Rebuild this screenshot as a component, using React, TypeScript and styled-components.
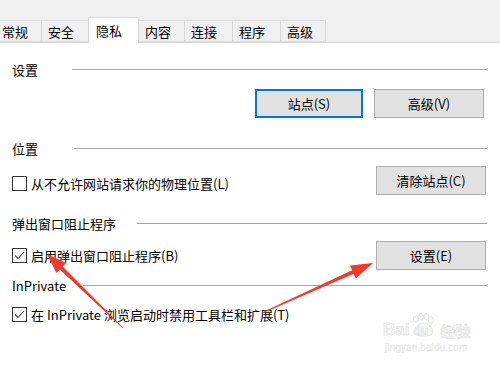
import React from "react";
import styled, { createGlobalStyle } from "styled-components";

const GlobalStyle = createGlobalStyle`
  html, body {
    margin: 0;
    padding: 0;
    background: #ffffff;
  }
  body {
    font-family: "Noto Sans CJK SC", "Noto Sans", sans-serif;
    color: #000;
  }
`;

const Page = styled.div`
  position: relative;
  width: 500px;
  height: 368px;
  overflow: hidden;
  background: #fff;
`;

const TabStrip = styled.div`
  display: flex;
  align-items: flex-end;
  height: 42px;
  background: #f0f0f0;
  border-bottom: 1px solid #d9d9d9;
`;

const Tab = styled.div<{ $w: number; $active?: boolean; $first?: boolean }>`
  box-sizing: border-box;
  display: flex;
  align-items: center;
  width: ${(p) => p.$w}px;
  height: ${(p) => (p.$active ? 26 : 22)}px;
  margin-right: -1px;
  margin-left: ${(p) => (p.$first ? -5 : 0)}px;
  margin-bottom: ${(p) => (p.$active ? -1 : 0)}px;
  padding-left: ${(p) => (p.$active ? 7 : 6)}px;
  border: 1px solid #d9d9d9;
  border-bottom: ${(p) => (p.$active ? "none" : "1px solid #d9d9d9")};
  background: ${(p) => (p.$active ? "#fff" : "#f0f0f0")};
  position: relative;
  z-index: ${(p) => (p.$active ? 1 : 0)};
  font-size: 13px;
  line-height: 1;
  white-space: nowrap;
`;

const Content = styled.div`
  padding: 0 13px 0 12px;
`;

const Heading = styled.div<{ $mt: number }>`
  display: flex;
  align-items: center;
  height: 20px;
  margin-top: ${(p) => p.$mt}px;
  font-size: 13px;
  line-height: 1;
  white-space: nowrap;
`;

const Rule = styled.div<{ $gap: number }>`
  flex: 1;
  height: 1px;
  margin-left: ${(p) => p.$gap}px;
  background: #a6a6a6;
`;

const Row = styled.div<{ $mt: number; $h?: number }>`
  display: flex;
  align-items: center;
  justify-content: space-between;
  height: ${(p) => p.$h ?? 29}px;
  margin-top: ${(p) => p.$mt}px;
`;

const ButtonGroup = styled.div<{ $pr: number }>`
  display: flex;
  gap: 11px;
  margin-left: auto;
  padding-right: ${(p) => p.$pr}px;
`;

const Button = styled.button<{ $w: number; $focused?: boolean }>`
  box-sizing: border-box;
  width: ${(p) => p.$w}px;
  height: 29px;
  padding: 0;
  background: #e1e1e1;
  border: ${(p) => (p.$focused ? "2px solid #0078d7" : "1px solid #adadad")};
  font-family: inherit;
  font-size: 13px;
  color: #000;
  line-height: 1;
`;

const Option = styled.label<{ $shift?: number }>`
  display: flex;
  align-items: center;
  gap: 4px;
  padding-top: ${(p) => (p.$shift ?? 0) * 2}px;
  font-size: 13px;
  line-height: 1;
  white-space: nowrap;
`;

const Box = styled.span`
  box-sizing: border-box;
  display: flex;
  align-items: center;
  justify-content: center;
  width: 15px;
  height: 15px;
  border: 1px solid #333;
  background: #fff;
`;

const Overlay = styled.svg`
  position: absolute;
  left: 0;
  top: 0;
  pointer-events: none;
`;

const Watermark = styled.div`
  position: absolute;
  left: 383px;
  top: 313px;
  display: flex;
  flex-direction: column;
  align-items: flex-start;
  color: #f6f6f6;
  -webkit-text-stroke: 0.6px #e2e2e2;
  pointer-events: none;
`;

const MarkTop = styled.div`
  display: flex;
  align-items: flex-end;
  font-family: "Liberation Sans", sans-serif;
  font-weight: bold;
  font-size: 17px;
  line-height: 1;
`;

const Paw = styled.div`
  position: relative;
  width: 26px;
  height: 25px;
  margin: 0 2px 0 1px;
`;

const PawText = styled.span`
  position: absolute;
  left: 3px;
  bottom: 1px;
  font-size: 12px;
`;

const MarkCn = styled.span`
  font-family: "Noto Sans CJK SC", sans-serif;
  font-size: 15px;
  margin-left: 2px;
`;

const MarkUrl = styled.div`
  margin-top: 4px;
  margin-left: 2px;
  font-family: "Liberation Sans", sans-serif;
  font-size: 10px;
  -webkit-text-stroke: 0.4px #e4e4e4;
  letter-spacing: 0.1px;
`;

const tabs = [
  { label: "常规", w: 47 },
  { label: "安全", w: 48 },
  { label: "隐私", w: 51, active: true },
  { label: "内容", w: 47 },
  { label: "连接", w: 49 },
  { label: "程序", w: 49 },
  { label: "高级", w: 46 },
];

function Check({ checked }: { checked?: boolean }) {
  return (
    <Box>
      {checked ? (
        <svg width="11" height="9" viewBox="0 0 11 9">
          <polyline points="1,4.5 4,7.5 10,1" fill="none" stroke="#444" strokeWidth="1.1" />
        </svg>
      ) : null}
    </Box>
  );
}

export default function App() {
  return (
    <Page>
      <GlobalStyle />
      <TabStrip>
        {tabs.map((t, i) => (
          <Tab key={t.label} $w={t.w} $active={t.active} $first={i === 0}>
            {t.label}
          </Tab>
        ))}
      </TabStrip>

      <Content>
        <Heading $mt={16}>
          设置
          <Rule $gap={34} />
        </Heading>
        <Row $mt={9} $h={30}>
          <ButtonGroup $pr={3}>
            <Button $w={108} $focused>站点(S)</Button>
            <Button $w={110}>高级(V)</Button>
          </ButtonGroup>
        </Row>

        <Heading $mt={20}>
          位置
          <Rule $gap={36} />
        </Heading>
        <Row $mt={8}>
          <Option $shift={3}>
            <Check />
            从不允许网站请求你的物理位置(L)
          </Option>
          <ButtonGroup $pr={1}>
            <Button $w={110}>清除站点(C)</Button>
          </ButtonGroup>
        </Row>

        <Heading $mt={18}>
          弹出窗口阻止程序
          <Rule $gap={21} />
        </Heading>
        <Row $mt={8}>
          <Option>
            <Check checked />
            启用弹出窗口阻止程序(B)
          </Option>
          <ButtonGroup $pr={1}>
            <Button $w={110}>设置(E)</Button>
          </ButtonGroup>
        </Row>

        <Heading $mt={5}>
          InPrivate
          <Rule $gap={17} />
        </Heading>
        <Row $mt={5} $h={28}>
          <Option>
            <Check checked />
            在 InPrivate 浏览启动时禁用工具栏和扩展(T)
          </Option>
        </Row>
      </Content>

      <Watermark>
        <MarkTop>
          Bai
          <Paw>
            <svg width="26" height="25" viewBox="0 0 26 25">
              <g fill="#f7f7f7" stroke="#e0e0e0" strokeWidth="0.8">
                <ellipse cx="6" cy="6" rx="2.6" ry="3.2" />
                <ellipse cx="11" cy="3.5" rx="2.6" ry="3.2" />
                <ellipse cx="16.5" cy="3.5" rx="2.6" ry="3.2" />
                <ellipse cx="21" cy="7" rx="2.6" ry="3.2" />
                <path d="M4 20 C4 14 9 10 13 10 C18 10 23 14 23 20 C23 24 4 24 4 20 Z" />
              </g>
            </svg>
            <PawText>du</PawText>
          </Paw>
          <MarkCn>经验</MarkCn>
        </MarkTop>
        <MarkUrl>jingyan.baidu.com</MarkUrl>
      </Watermark>

      <Overlay width="500" height="368" viewBox="0 0 500 368">
        <polygon
          fill="#ee3b2d"
          points="123.35,327.64 62.7,266.6 66.2,263 47,254 56.4,273 59.9,269.4 122.65,328.36"
        />
        <polygon
          fill="#ee3b2d"
          points="262.2,313.5 353.7,273.8 355.8,278.4 373,263 350,265.6 352.1,270.2 261.8,312.5"
        />
      </Overlay>
    </Page>
  );
}
